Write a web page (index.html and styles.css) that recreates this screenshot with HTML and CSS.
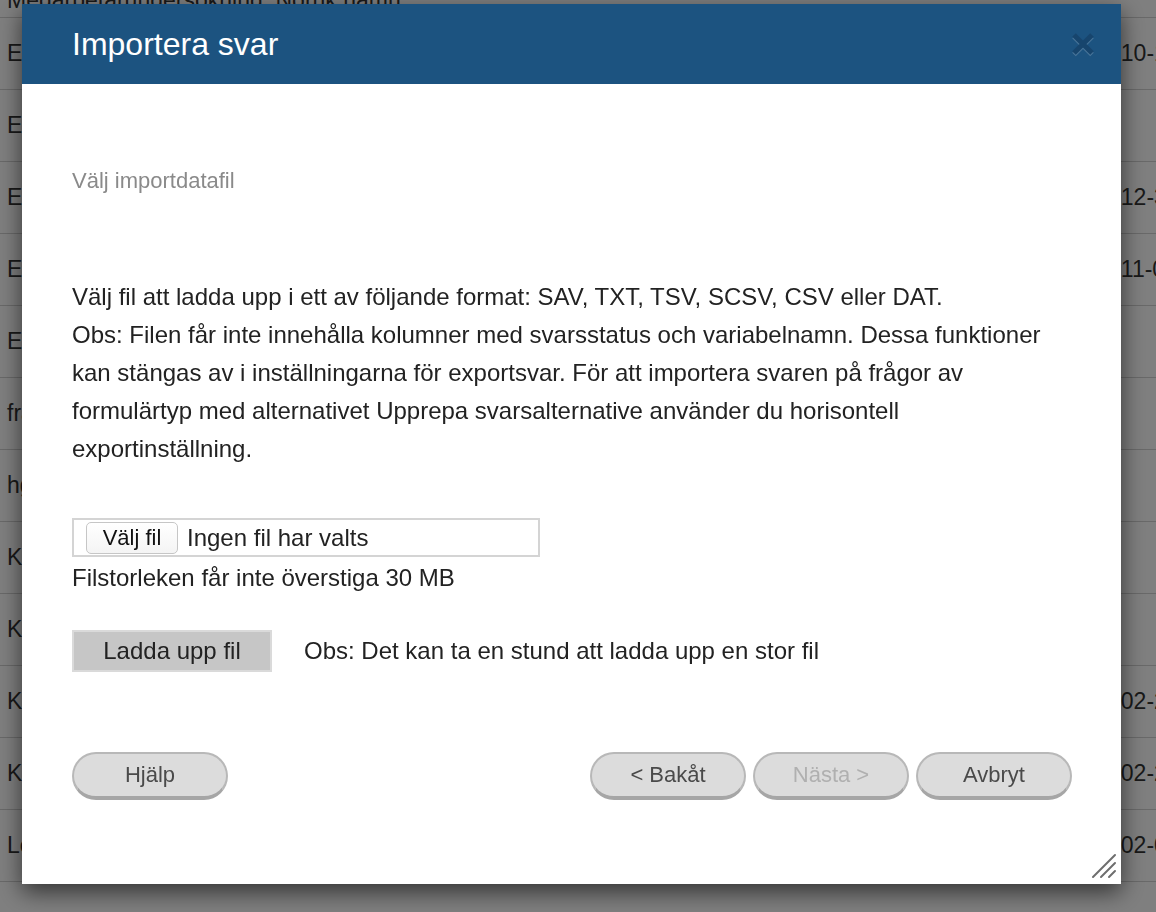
FILE: index.html
```html
<!DOCTYPE html>
<html lang="sv">
<head>
<meta charset="utf-8">
<title>Importera svar</title>
<link rel="stylesheet" href="styles.css">
</head>
<body>
<div class="list">
  <div class="row first"><span class="name">Medarbetarundersökning_Nornk.namn</span><span class="date"></span></div>
  <div class="row"><span class="name">Exempelenkät 2018</span><span class="date">2017-10-12</span></div>
  <div class="row"><span class="name">Enkät kundnöjdhet</span><span class="date"></span></div>
  <div class="row"><span class="name">Enkät personal</span><span class="date">2017-12-30</span></div>
  <div class="row"><span class="name">Enkät utbildning</span><span class="date">2018-11-05</span></div>
  <div class="row"><span class="name">Enkät 2019</span><span class="date"></span></div>
  <div class="row"><span class="name">frågor om arbetsmiljö</span><span class="date"></span></div>
  <div class="row"><span class="name">hgfdsa test</span><span class="date"></span></div>
  <div class="row"><span class="name">Kursutvärdering A</span><span class="date"></span></div>
  <div class="row"><span class="name">Kursutvärdering B</span><span class="date"></span></div>
  <div class="row"><span class="name">Kundenkät vår</span><span class="date">2019-02-21</span></div>
  <div class="row"><span class="name">Kundenkät höst</span><span class="date">2019-02-25</span></div>
  <div class="row"><span class="name">Ledarskapsenkät</span><span class="date">2019-02-04</span></div>
</div>

<div class="overlay"></div>

<div class="dialog">
  <div class="dialog-header">
    <h1 class="dialog-title">Importera svar</h1>
    <button class="close" aria-label="Stäng">
      <svg width="24" height="26" viewBox="0 0 24 26">
        <path d="M3 4.5 L21 22.5 M21 4.5 L3 22.5" stroke="rgba(255,255,255,0.2)" stroke-width="5" fill="none"/>
        <path d="M3 3 L21 21 M21 3 L3 21" stroke="#17456d" stroke-width="5" fill="none"/>
      </svg>
    </button>
  </div>
  <div class="dialog-body">
    <div class="step-label">Välj importdatafil</div>
    <p class="info">Välj fil att ladda upp i ett av följande format: SAV, TXT, TSV, SCSV, CSV eller DAT.<br>Obs: Filen får inte innehålla kolumner med svarsstatus och variabelnamn. Dessa funktioner kan stängas av i inställningarna för exportsvar. För att importera svaren på frågor av formulärtyp med alternativet Upprepa svarsalternative använder du horisontell exportinställning.</p>
    <div class="file-input">
      <span class="file-btn">Välj fil</span>
      <span class="file-name">Ingen fil har valts</span>
    </div>
    <div class="file-note">Filstorleken får inte överstiga 30 MB</div>
    <div class="upload-row">
      <button class="upload-btn">Ladda upp fil</button>
      <span class="upload-note">Obs: Det kan ta en stund att ladda upp en stor fil</span>
    </div>
  </div>
  <div class="dialog-footer">
    <button class="pill">Hjälp</button>
    <div class="footer-right">
      <button class="pill">&lt; Bakåt</button>
      <button class="pill disabled">Nästa &gt;</button>
      <button class="pill">Avbryt</button>
    </div>
  </div>
  <svg class="grip" width="26" height="26" viewBox="0 0 26 26">
    <path d="M2 24 L24 2 M10 24 L24 10 M18 24 L24 18" stroke="#6e6e6e" stroke-width="2" stroke-linecap="round" fill="none"/>
  </svg>
</div>
</body>
</html>
```

FILE: styles.css
```css
* { box-sizing: border-box; }
html, body { margin: 0; padding: 0; }
body {
  width: 1156px;
  height: 912px;
  overflow: hidden;
  background: #ffffff;
  font-family: "Liberation Sans", Arial, Helvetica, sans-serif;
  color: #222;
}

.list { margin-top: -16px; }
.row {
  display: flex;
  align-items: center;
  height: 72px;
  border-bottom: 1px solid #d2d2d2;
  padding-left: 7px;
  font-size: 23px;
  color: #333;
  white-space: nowrap;
}
.row.first { height: 34px; }
.row .name { flex: 1; }
.row .date { width: 94px; }

.overlay {
  position: fixed;
  inset: 0;
  background: rgba(0, 0, 0, 0.5);
}

.dialog {
  position: fixed;
  left: 22px;
  top: 4px;
  width: 1099px;
  height: 880px;
  background: #fff;
  display: flex;
  flex-direction: column;
  box-shadow: 0 8px 22px rgba(0, 0, 0, 0.6);
}

.dialog-header {
  height: 80px;
  background: #1c5380;
  display: flex;
  align-items: center;
  justify-content: space-between;
  padding: 0 26px 0 50px;
}
.dialog-title {
  margin: 0;
  font-size: 32px;
  font-weight: normal;
  color: #fff;
}
.close {
  border: 0;
  background: none;
  padding: 0;
  width: 24px;
  height: 26px;
  margin-top: 1px;
}
.close svg { display: block; }

.dialog-body {
  padding: 84px 49px 0 50px;
}
.step-label {
  font-size: 22px;
  line-height: 26px;
  color: #8a8a8a;
}
.info {
  margin: 84px 0 0;
  width: 990px;
  font-size: 24px;
  line-height: 38px;
  color: #222;
}

.file-input {
  margin-top: 50px;
  width: 468px;
  height: 39px;
  border: 2px solid #d4d4d4;
  display: flex;
  align-items: center;
  padding-left: 12px;
  gap: 9px;
}
.file-btn {
  height: 32px;
  width: 92px;
  border: 1px solid #c6c6c6;
  border-radius: 5px;
  background: linear-gradient(#ffffff, #f4f4f4);
  font-size: 22px;
  line-height: 30px;
  text-align: center;
  color: #111;
}
.file-name {
  font-size: 24px;
  color: #222;
}
.file-note {
  font-size: 24px;
  line-height: 42px;
  color: #222;
}

.upload-row {
  margin-top: 31px;
  display: flex;
  align-items: center;
  gap: 32px;
}
.upload-btn {
  width: 200px;
  height: 42px;
  background: #c6c6c6;
  border: 2px solid #dadada;
  font-family: inherit;
  font-size: 24px;
  color: #222;
  padding: 0;
}
.upload-note {
  font-size: 24px;
  color: #222;
}

.dialog-footer {
  margin-top: 80px;
  padding: 0 49px 0 50px;
  display: flex;
  justify-content: space-between;
}
.footer-right {
  display: flex;
  gap: 7px;
}
.pill {
  width: 156px;
  height: 48px;
  border-radius: 24px;
  background: #dcdcdc;
  border: 2px solid #b8b8b8;
  border-bottom: 4px solid #a6a6a6;
  font-family: inherit;
  font-size: 22px;
  color: #4a4a4a;
  padding: 0;
}
.pill.disabled { color: #b0b0b0; }

.grip {
  position: absolute;
  right: 4px;
  bottom: 5px;
}
```
